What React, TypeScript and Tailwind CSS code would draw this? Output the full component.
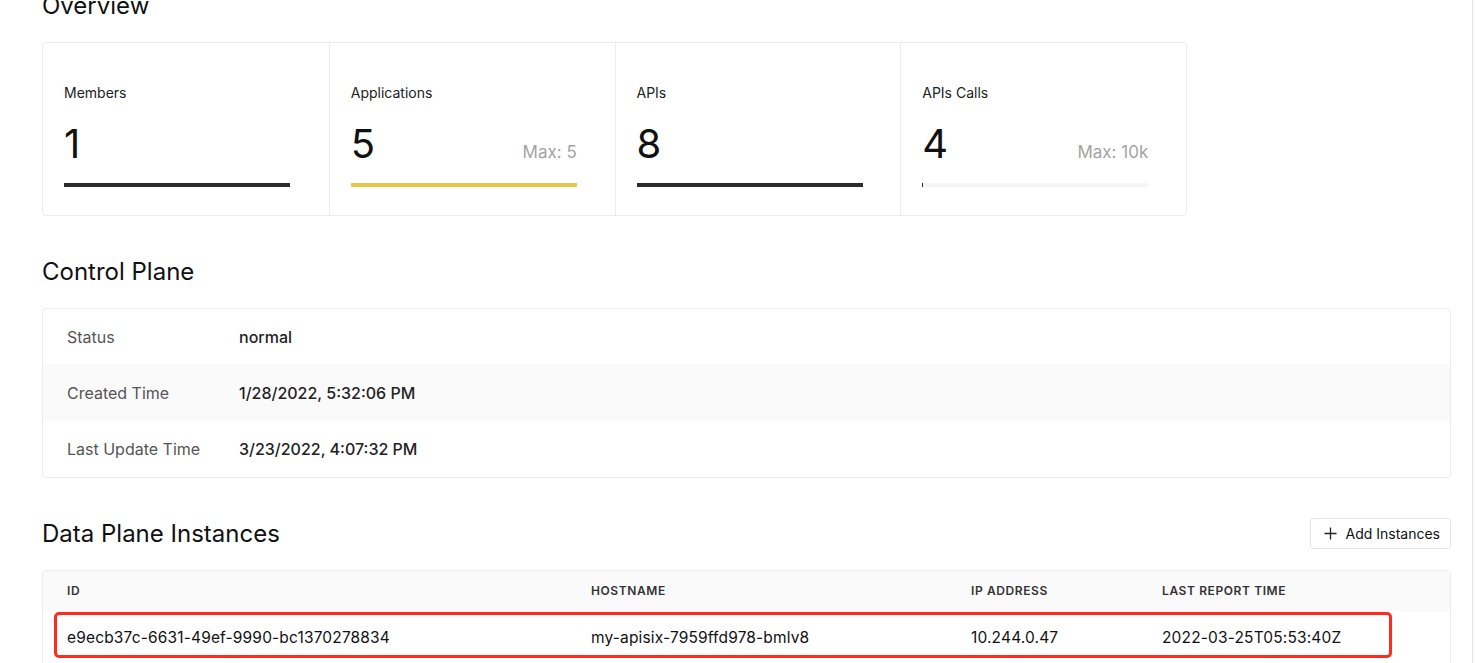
const STATS = [
  { label: 'Members', value: '1', max: null, bar: 'bg-[#2b2b2b]', fill: 100 },
  { label: 'Applications', value: '5', max: 'Max: 5', bar: 'bg-[#ebc446]', fill: 100 },
  { label: 'APIs', value: '8', max: null, bar: 'bg-[#2b2b2b]', fill: 100 },
  { label: 'APIs Calls', value: '4', max: 'Max: 10k', bar: 'bg-[#2b2b2b]', fill: 0.4 },
];

const CONTROL_PLANE = [
  { label: 'Status', value: 'normal' },
  { label: 'Created Time', value: '1/28/2022, 5:32:06 PM' },
  { label: 'Last Update Time', value: '3/23/2022, 4:07:32 PM' },
];

const INSTANCES = [
  {
    id: 'e9ecb37c-6631-49ef-9990-bc1370278834',
    hostname: 'my-apisix-7959ffd978-bmlv8',
    ip: '10.244.0.47',
    reported: '2022-03-25T05:53:40Z',
  },
];

function SectionTitle({ children }: { children: React.ReactNode }) {
  return <h2 className="text-[24px] leading-[30px] font-normal text-[#111]">{children}</h2>;
}

function StatCell({ stat, first }: { stat: (typeof STATS)[number]; first: boolean }) {
  return (
    <div className={`pl-[21px] pt-[41px] pb-[28px] ${first ? '' : 'border-l border-[#ececec]'}`}>
      <div className="text-[14px] leading-[18px] text-[#222]">{stat.label}</div>
      <div className="mt-[18px] w-[226px] flex items-baseline justify-between">
        <span className="text-[40px] leading-[48px] text-[#111]">{stat.value}</span>
        {stat.max && <span className="text-[17px] text-[#a3a3a3]">{stat.max}</span>}
      </div>
      <div className="mt-[15px] w-[226px] h-[4px] bg-[#f5f5f5]">
        <div className={`h-full min-w-[1px] ${stat.bar}`} style={{ width: `${stat.fill}%` }} />
      </div>
    </div>
  );
}

export default function App() {
  return (
    <div className="flex min-h-[663px] bg-white" style={{ fontFamily: 'Inter, "Noto Sans", sans-serif' }}>
      <main className="flex-1 pl-[42px] pr-[21px] -mt-[9px] overflow-hidden h-[672px]">
        <SectionTitle>Overview</SectionTitle>
        <div className="mt-[21px] w-[1145px] grid grid-cols-4 border border-[#ececec] rounded-[4px]">
          {STATS.map((s, i) => (
            <StatCell key={s.label} stat={s} first={i === 0} />
          ))}
        </div>

        <div className="mt-[41px]">
          <SectionTitle>Control Plane</SectionTitle>
        </div>
        <div className="mt-[21px] border border-[#ececec] rounded-[4px] overflow-hidden">
          {CONTROL_PLANE.map((row, i) => (
            <div
              key={row.label}
              className={`h-[56px] flex items-center pl-[24px] text-[16px] ${i === 1 ? 'bg-[#fafafa]' : ''}`}
            >
              <span className="w-[172px] text-[#555]">{row.label}</span>
              <span className="text-[#222] font-medium">{row.value}</span>
            </div>
          ))}
        </div>

        <div className="mt-[40px] flex items-center justify-between">
          <SectionTitle>Data Plane Instances</SectionTitle>
          <button className="h-[31px] pl-[13px] pr-[10px] flex items-center gap-[9px] border border-[#e6e6e6] rounded-[3px] text-[14px] text-[#111] bg-white">
            <svg width="13" height="13" viewBox="0 0 13 13" fill="none" stroke="#222" strokeWidth="1.3">
              <path d="M6.5 0.5v12M0.5 6.5h12" />
            </svg>
            Add Instances
          </button>
        </div>

        <div className="mt-[21px] border border-[#ececec] rounded-t-[4px]">
          <div className="h-[40px] bg-[#fafafa] grid grid-cols-[524px_380px_191px_1fr] items-center pl-[24px] text-[12px] font-semibold tracking-[0.05em] text-[#333] uppercase">
            <span>ID</span>
            <span>Hostname</span>
            <span>IP Address</span>
            <span>Last Report Time</span>
          </div>
          {INSTANCES.map(inst => (
            <div key={inst.id} className="relative h-[54px] grid grid-cols-[524px_380px_191px_1fr] items-center pl-[24px] text-[15.5px] tracking-[0.01em] text-[#111]">
              <span>{inst.id}</span>
              <span>{inst.hostname}</span>
              <span>{inst.ip}</span>
              <span>{inst.reported}</span>
              <div className="absolute left-[11px] top-[1px] w-[1338px] h-[46px] border-[3px] border-[#ff2b1c] rounded-[5px] pointer-events-none" />
            </div>
          ))}
        </div>
      </main>
      <div className="w-[3px] border-l border-[#e3e3e3] bg-[#fafafa]" />
    </div>
  );
}
